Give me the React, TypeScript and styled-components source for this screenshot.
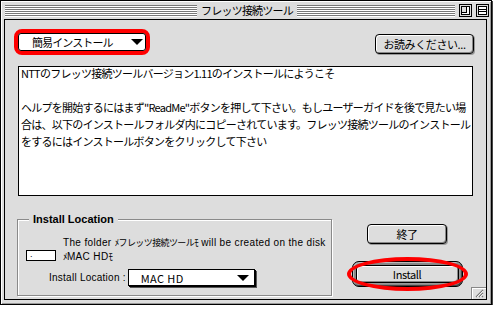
import * as React from "react"
import styled, { createGlobalStyle } from "styled-components"

const JP = `"Noto Sans CJK JP", "Liberation Sans", sans-serif`
const UI = `"Liberation Sans", "Noto Sans CJK JP", sans-serif`

const GlobalStyle = createGlobalStyle`
  html, body { margin: 0; padding: 0; background: #fff; }
  body { font-family: ${UI}; color: #000; }
`

const Window = styled.div`
  box-sizing: border-box;
  width: 492px;
  height: 305px;
  border: 1px solid #000;
  background: #ddd;
  box-shadow: inset 1px 1px 0 #fff, inset -1px -1px 0 #999, 1px 1px 0 #444;
  display: flex;
  flex-direction: column;
`

const TitleBar = styled.div`
  height: 18px;
  display: flex;
  align-items: center;
  padding: 0 2px 0 4px;
`

const Side = styled.div`
  flex: 1 1 0;
  display: flex;
  align-items: center;
  gap: 3px;
`

const Stripes = styled.div`
  flex: 1;
  height: 12px;
  margin-top: 1px;
  background: repeating-linear-gradient(to bottom, #777 0 1px, #fff 1px 2px);
`

const Title = styled.div`
  padding: 0 4px;
  font-family: ${JP};
  font-size: 11px;
  letter-spacing: -0.8px;
  line-height: 18px;
  white-space: nowrap;
`

const TitleBox = styled.svg`
  flex: none;
  width: 13px;
  height: 13px;
  margin-left: 1px;
`

const Body = styled.div`
  flex: 1;
  display: flex;
  padding: 0 4px 4px 3px;
`

const Content = styled.div`
  position: relative;
  flex: 1;
  border: 1px solid #000;
  background: #ddd;
  display: flex;
  flex-direction: column;
  padding: 9px 12px 0 9px;
`

const TopRow = styled.div`
  height: 26px;
  display: flex;
  justify-content: space-between;
  align-items: flex-end;
`

const RedRing = styled.div`
  box-sizing: border-box;
  width: 136px;
  height: 26px;
  border: 4px solid #f00;
  border-radius: 8px;
`

const Popup = styled.div<{ $w: number; $h: number; $shadow?: boolean }>`
  box-sizing: border-box;
  width: ${(p) => p.$w}px;
  height: ${(p) => p.$h}px;
  border: 1px solid #000;
  border-radius: ${(p) => (p.$shadow ? 0 : 3)}px;
  background: #fff;
  box-shadow: ${(p) => (p.$shadow ? "1px 1px 0 #000, 2px 2px 0 #555" : "none")};
  display: flex;
  align-items: center;
  justify-content: space-between;
  padding: 0 ${(p) => (p.$shadow ? 5 : 2)}px 0 ${(p) => (p.$shadow ? 12 : 13)}px;
  font-family: ${JP};
  font-size: 11px;
  letter-spacing: ${(p) => (p.$shadow ? "0.4px" : "-0.9px")};
  white-space: nowrap;
`

const Arrow = styled.span`
  width: 0;
  height: 0;
  border-left: 6px solid transparent;
  border-right: 6px solid transparent;
  border-top: 6px solid #000;
`

const Button = styled.button<{ $w: number; $h: number }>`
  box-sizing: border-box;
  width: ${(p) => p.$w}px;
  height: ${(p) => p.$h}px;
  padding: 0;
  border: 1px solid #000;
  border-radius: 4px;
  background: #ddd;
  box-shadow: inset 1px 1px 0 #fff, inset -1px -1px 0 #888, 1px 1px 0 #999;
  font-family: ${JP};
  font-size: 11px;
  letter-spacing: -0.4px;
  color: #000;
  line-height: 1;
`

const ReadButton = styled(Button)`
  margin-bottom: 1px;
`

const TextArea = styled.div`
  box-sizing: border-box;
  width: 455px;
  height: 130px;
  margin: 11px 0 0 4px;
  border: 1px solid #000;
  background: #fff;
  padding: 0 2px;
  font-family: ${JP};
  font-size: 11px;
  letter-spacing: -0.75px;
`

const Line = styled.div`
  white-space: nowrap;
  height: 17px;
  line-height: 13px;
`

const Bottom = styled.div`
  display: flex;
  margin-top: 23px;
`

const GroupBox = styled.div`
  box-sizing: border-box;
  width: 315px;
  height: 77px;
  margin-left: 3px;
  border: 1px solid #8a8a8a;
  box-shadow: inset 1px 1px 0 #fff, 1px 1px 0 #fff;
  display: flex;
  flex-direction: column;
`

const Legend = styled.div`
  align-self: flex-start;
  margin: -7px 0 0 11px;
  padding: 0 4px;
  background: #ddd;
  font-family: ${UI};
  font-weight: bold;
  font-size: 11px;
  line-height: 13px;
`

const FolderRow = styled.div`
  display: flex;
  align-items: flex-end;
  margin-top: 10px;
  padding-left: 8px;
`

const SmallField = styled.div`
  box-sizing: border-box;
  width: 30px;
  height: 11px;
  margin-bottom: 3px;
  border: 1px solid #000;
  background: #fff;
  font-size: 9px;
  line-height: 7px;
  padding-left: 3px;
`

const FolderText = styled.div`
  margin-left: 7px;
  font-family: ${UI};
  font-size: 10px;
  letter-spacing: 0.35px;
  line-height: 14px;
  white-space: nowrap;
`

const Tiny = styled.span`
  font-family: ${JP};
  font-size: 9px;
  letter-spacing: -0.6px;
`

const LocationRow = styled.div`
  display: flex;
  align-items: center;
  gap: 2px;
  margin-top: 5px;
  padding-left: 31px;
`

const Label = styled.span`
  font-family: ${UI};
  font-size: 10px;
  letter-spacing: 0.25px;
  white-space: nowrap;
`

const RightColumn = styled.div`
  flex: 1;
  display: flex;
  flex-direction: column;
  align-items: center;
  padding: 5px 0 0 8px;
`

const DefaultRing = styled.div`
  position: relative;
  box-sizing: border-box;
  width: 111px;
  height: 26px;
  margin-top: 17px;
  border: 1px solid #000;
  border-radius: 7px;
  background: #888;
  box-shadow: inset 1px 1px 0 #bbb, inset -1px -1px 0 #444;
  display: flex;
  align-items: center;
  justify-content: center;
`

const RedEllipse = styled.div`
  position: absolute;
  left: -6px;
  top: -5px;
  width: 121px;
  height: 34px;
  box-sizing: border-box;
  border: 4px solid #f00;
  border-radius: 50%;
  pointer-events: none;
`

const GrowBox = styled.svg`
  position: absolute;
  right: 0;
  bottom: 0;
  width: 15px;
  height: 12px;
`

export default function App() {
  return (
    <>
      <GlobalStyle />
      <Window>
        <TitleBar>
          <Side>
            <Stripes />
          </Side>
          <Title>フレッツ接続ツール</Title>
          <Side>
            <Stripes />
            <TitleBox viewBox="0 0 13 13">
              <rect x="0.5" y="0.5" width="12" height="12" fill="#ddd" stroke="#000" />
              <rect x="2.5" y="2.5" width="8" height="8" fill="#fff" stroke="#000" />
              <rect x="2.5" y="2.5" width="5" height="6" fill="#ddd" stroke="#000" />
            </TitleBox>
            <TitleBox viewBox="0 0 13 13">
              <rect x="0.5" y="0.5" width="12" height="12" fill="#ddd" stroke="#000" />
              <rect x="2.5" y="2.5" width="8" height="8" fill="#fff" stroke="#000" />
              <line x1="2" y1="5.5" x2="11" y2="5.5" stroke="#000" />
              <line x1="2" y1="7.5" x2="11" y2="7.5" stroke="#000" />
            </TitleBox>
          </Side>
        </TitleBar>
        <Body>
          <Content>
            <TopRow>
              <RedRing>
                <Popup $w={128} $h={18}>
                  <span>簡易インストール</span>
                  <Arrow />
                </Popup>
              </RedRing>
              <ReadButton $w={99} $h={20}>お読みください...</ReadButton>
            </TopRow>
            <TextArea>
              <Line>NTTのフレッツ接続ツールバージョン1.11のインストールにようこそ</Line>
              <Line />
              <Line>ヘルプを開始するにはまず"ReadMe"ボタンを押して下さい。もしユーザーガイドを後で見たい場</Line>
              <Line>合は、以下のインストールフォルダ内にコピーされています。フレッツ接続ツールのインストール</Line>
              <Line>をするにはインストールボタンをクリックして下さい</Line>
            </TextArea>
            <Bottom>
              <GroupBox>
                <Legend>Install Location</Legend>
                <FolderRow>
                  <SmallField>.</SmallField>
                  <FolderText>
                    The folder <Tiny>ﾒフレッツ接続ツールﾓ</Tiny> will be created on the disk
                    <br />
                    <Tiny>ﾒ</Tiny>MAC HD<Tiny>ﾓ</Tiny>
                  </FolderText>
                </FolderRow>
                <LocationRow>
                  <Label>Install Location :</Label>
                  <Popup $w={127} $h={17} $shadow>
                    <span>MAC HD</span>
                    <Arrow />
                  </Popup>
                </LocationRow>
              </GroupBox>
              <RightColumn>
                <Button $w={80} $h={20}>終了</Button>
                <DefaultRing>
                  <Button $w={103} $h={18}>Install</Button>
                  <RedEllipse />
                </DefaultRing>
              </RightColumn>
            </Bottom>
            <GrowBox viewBox="0 0 15 12">
              <line x1="0.5" y1="0" x2="0.5" y2="12" stroke="#888" />
              <line x1="0" y1="0.5" x2="15" y2="0.5" stroke="#888" />
              <line x1="1.5" y1="1" x2="1.5" y2="12" stroke="#fff" />
              <line x1="1" y1="1.5" x2="15" y2="1.5" stroke="#fff" />
              <path d="M5 10 L12 3 M8 10 L12 6 M11 10 L12 9" stroke="#777" strokeWidth="1.2" />
              <path d="M6 10 L12 4 M9 10 L12 7" stroke="#fff" strokeWidth="0.8" />
            </GrowBox>
          </Content>
        </Body>
      </Window>
    </>
  )
}
